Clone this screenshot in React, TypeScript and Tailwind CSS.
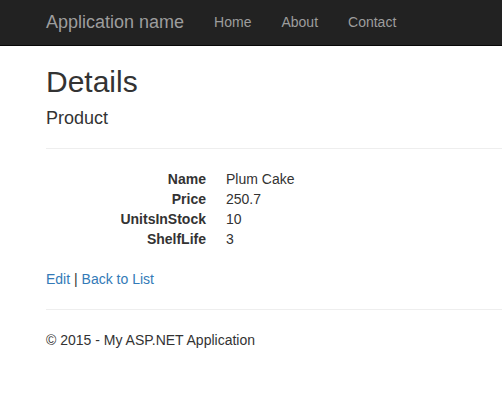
export default function App() {
  const rows: [string, string][] = [
    ["Name", "Plum Cake"],
    ["Price", "250.7"],
    ["UnitsInStock", "10"],
    ["ShelfLife", "3"],
  ];
  return (
    <div
      className="min-h-[417px] bg-white text-[#333] text-[14px] leading-[20px]"
      style={{ fontFamily: '"Liberation Sans", Arial, Helvetica, sans-serif' }}
    >
      <nav className="h-[46px] bg-[#222] border-b border-[#080808] flex items-center pl-[46px] pb-[2px]">
        <span className="text-[18px] leading-[20px] text-[#9d9d9d]">Application name</span>
        <ul className="flex ml-[30px] gap-[30px] text-[#9d9d9d]">
          <li>Home</li>
          <li>About</li>
          <li>Contact</li>
        </ul>
      </nav>
      <div className="pl-[46px]">
        <h2 className="mt-[19px] text-[30px] leading-[33px] font-normal">Details</h2>
        <h4 className="mt-[10px] text-[18px] leading-[20px] font-normal">Product</h4>
        <hr className="mt-[20px] mb-[20px] border-0 border-t border-[#eee]" />
        <dl className="mb-[20px]">
          {rows.map(([k, v]) => (
            <div key={k} className="flex">
              <dt className="w-[160px] text-right font-bold">{k}</dt>
              <dd className="ml-[20px]">{v}</dd>
            </div>
          ))}
        </dl>
        <p>
          <a className="text-[#337ab7]">Edit</a> | <a className="text-[#337ab7]">Back to List</a>
        </p>
        <hr className="mt-[20px] mb-[20px] border-0 border-t border-[#eee]" />
        <footer>
          <p>© 2015 - My ASP.NET Application</p>
        </footer>
      </div>
    </div>
  );
}
